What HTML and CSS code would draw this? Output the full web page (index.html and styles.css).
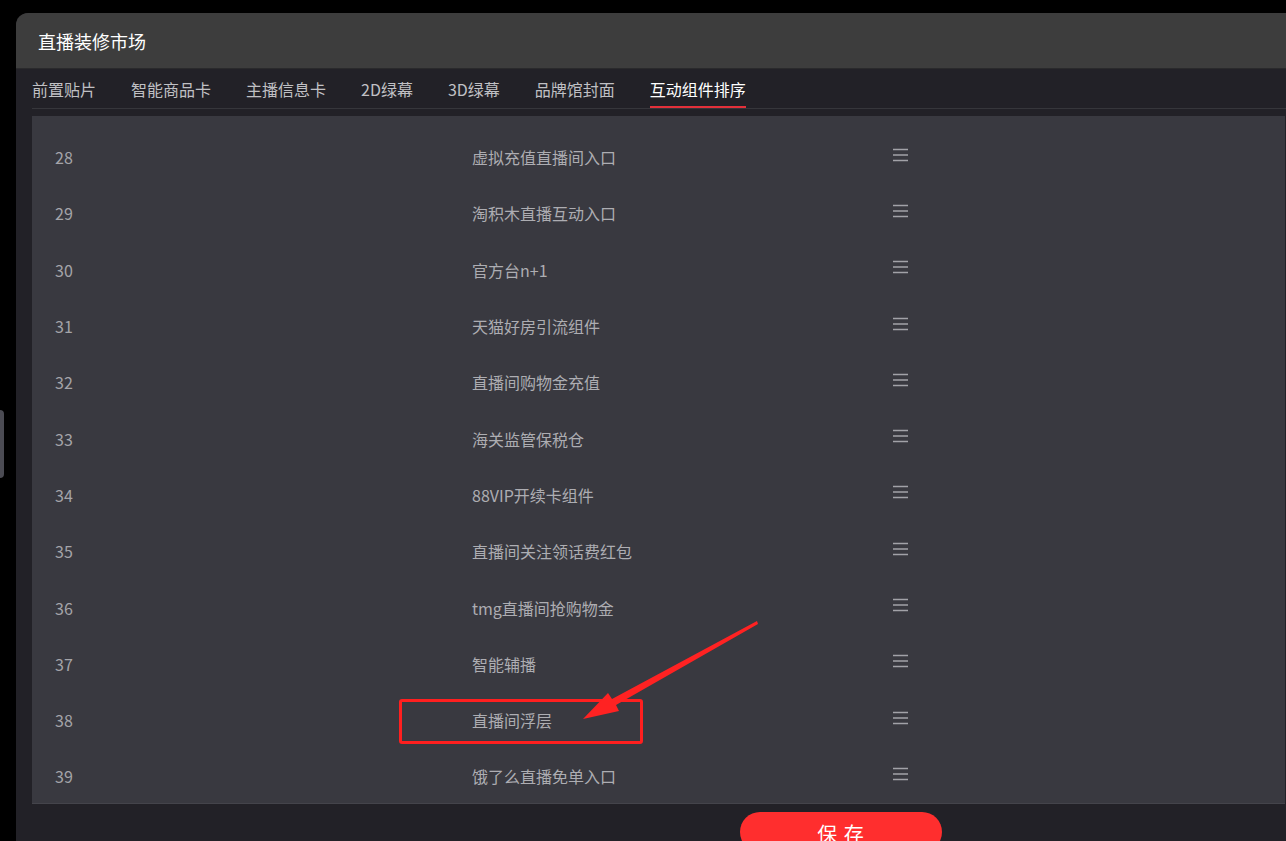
FILE: index.html
```html
<!DOCTYPE html>
<html lang="zh-CN">

<head>
    <meta charset="UTF-8">
    <meta name="viewport" content="width=device-width, initial-scale=1.0">
    <title>直播装修市场</title>
    <link rel="stylesheet" href="styles.css">
</head>

<body>

    <!-- 左侧小把手 -->
    <div class="side-handle"></div>

    <div class="window">
        <div class="window-header">直播装修市场</div>

        <!-- 选项卡 -->
        <div class="tabs">
            <div class="tab">前置贴片</div>
            <div class="tab">智能商品卡</div>
            <div class="tab">主播信息卡</div>
            <div class="tab">2D绿幕</div>
            <div class="tab">3D绿幕</div>
            <div class="tab">品牌馆封面</div>
            <div class="tab active">互动组件排序</div>
        </div>

        <!-- 组件列表 -->
        <div class="list" id="list"></div>

        <div class="footer">
            <button class="save-btn">保 存</button>
        </div>
    </div>

    <!-- 标注 -->
    <div class="mark-box"></div>
    <svg class="mark-arrow" width="1286" height="841" viewBox="0 0 1286 841">
        <polygon points="757,621 758,624 616,705 619,711 583,719 608,693 612,699" fill="#ff2222" />
    </svg>

    <script>
        // 组件数据
        const components = [
            [28, "虚拟充值直播间入口"],
            [29, "淘积木直播互动入口"],
            [30, "官方台n+1"],
            [31, "天猫好房引流组件"],
            [32, "直播间购物金充值"],
            [33, "海关监管保税仓"],
            [34, "88VIP开续卡组件"],
            [35, "直播间关注领话费红包"],
            [36, "tmg直播间抢购物金"],
            [37, "智能辅播"],
            [38, "直播间浮层"],
            [39, "饿了么直播免单入口"]
        ];

        const list = document.getElementById('list');
        components.forEach(item => {
            const row = document.createElement('div');
            row.className = 'row';
            row.innerHTML =
                '<span class="num">' + item[0] + '</span>' +
                '<span class="name">' + item[1] + '</span>' +
                '<svg class="drag" width="15" height="14" viewBox="0 0 15 14">' +
                '<path d="M0 1.5H15M0 7H15M0 12.5H15" stroke="#a2a2a8" stroke-width="1.4" />' +
                '</svg>';
            list.appendChild(row);
        });
    </script>

</body>

</html>
```

FILE: styles.css
```css
/* 基础 */
body {
    margin: 0;
    background-color: #000;
    font-family: "Noto Sans CJK SC", "Noto Sans", sans-serif;
    height: 841px;
    overflow: hidden;
}

.side-handle {
    position: absolute;
    left: 0;
    top: 410px;
    width: 4px;
    height: 68px;
    background-color: #4b4b53;
    border-radius: 0 6px 6px 0;
}

/* 窗口 */
.window {
    margin: 13px 0 0 16px;
    height: 828px;
    background-color: #222127;
    border-radius: 12px 0 0 0;
    overflow: hidden;
}

.window-header {
    height: 55px;
    border-bottom: 1px solid #2a2a2c;
    background-color: #3d3d3d;
    display: flex;
    align-items: center;
    padding-left: 22px;
    font-size: 18px;
    color: #fff;
}

/* 选项卡 */
.tabs {
    display: flex;
    gap: 35px;
    margin: 0 0 0 16px;
    height: 39px;
    border-bottom: 1px solid #36363b;
    font-size: 16px;
    color: #c0c0c4;
}

.tab {
    box-sizing: border-box;
    height: 39px;
    line-height: 41px;
    border-bottom: 2px solid transparent;
}

.tab.active {
    color: #fff;
    border-bottom-color: #e3303a;
}

/* 列表 */
.list {
    margin: 7px 1px 0 16px;
    height: 688px;
    padding-top: 13px;
    box-sizing: border-box;
    background-color: #393940;
    border-bottom: 1px solid #44444b;
}

.row {
    display: grid;
    grid-template-columns: 417px 421px auto;
    align-items: center;
    height: 56.3px;
    padding-left: 23px;
    font-size: 16px;
    color: #adadb2;
}

.num {
    color: #a4a4a9;
}

.drag {
    margin-bottom: 5px;
}

/* 底部 */
.footer {
    padding: 8px 0 0 724px;
}

.save-btn {
    width: 202px;
    height: 40px;
    padding-top: 3px;
    border: none;
    border-radius: 20px;
    background-color: #ff2e2e;
    color: #fff;
    font-family: inherit;
    font-size: 20px;
    letter-spacing: 1px;
    cursor: pointer;
}

/* 标注 */
.mark-box {
    position: absolute;
    left: 399px;
    top: 699px;
    width: 238px;
    height: 39px;
    border: 3px solid #ff1f1f;
    border-radius: 3px;
}

.mark-arrow {
    position: absolute;
    left: 0;
    top: 0;
}
```
